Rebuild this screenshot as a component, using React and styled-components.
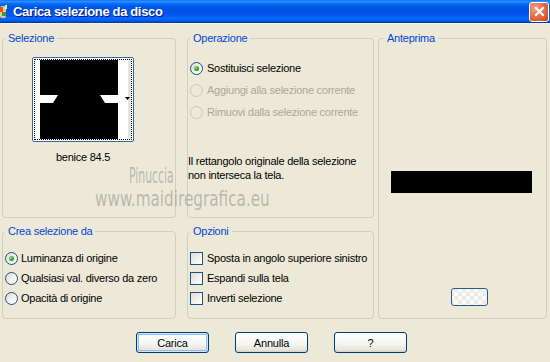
import React from 'react';
import styled, { createGlobalStyle, css } from 'styled-components';

const GlobalStyle = createGlobalStyle`
    html, body {
        margin: 0;
        padding: 0;
        background: #ece9d8;
    }
    body {
        font-family: "Liberation Sans", Arial, sans-serif;
        font-size: 11px;
        letter-spacing: -0.25px;
        color: #000;
    }
`;

const Window = styled.div`
    position: relative;
    width: 550px;
    height: 362px;
    overflow: hidden;
    background: #ece9d8;
`;

// XP luna title bar
const TitleBar = styled.div`
    height: 23px;
    display: flex;
    align-items: center;
    background: linear-gradient(to bottom,
        #0058ee 0%, #3593ff 4%, #288eff 8%, #127dff 12%, #036ffc 16%,
        #0262ee 22%, #0057e5 30%, #0054e3 40%, #0055eb 60%, #005bf5 70%,
        #026afe 80%, #0062ef 88%, #0052d6 93%, #0040ab 97%, #003092 100%);
    border-bottom: 1px solid #f4f3ee;
`;

const AppIcon = styled.svg`
    width: 8px;
    height: 16px;
    flex: none;
`;

const Title = styled.span`
    margin-left: 5px;
    color: #fff;
    font-family: "Liberation Sans", Arial, sans-serif;
    font-weight: bold;
    font-size: 13px;
    letter-spacing: -0.35px;
    text-shadow: 1px 1px 0 #0a1883;
`;

const CloseButton = styled.div`
    margin-left: auto;
    margin-right: 1px;
    width: 20px;
    height: 20px;
    box-sizing: border-box;
    border: 1px solid #fff;
    border-radius: 3px;
    background: radial-gradient(circle at 30% 30%, #f4a584 0%, #e4704a 45%, #c74520 100%);
    display: flex;
    align-items: center;
    justify-content: center;
`;

const Body = styled.div`
    padding: 8px 0 0 2px;
`;

const Panels = styled.div`
    display: flex;
    align-items: flex-start;
`;

const LeftGrid = styled.div`
    display: grid;
    grid-template-columns: 174px 187px;
    grid-template-rows: 186px 94px;
    column-gap: 11px;
    row-gap: 7px;
`;

const Group = styled.fieldset`
    box-sizing: border-box;
    margin: 0;
    padding: 0;
    min-width: 0;
    height: ${p => p.$height || '100%'};
    width: ${p => p.$width || 'auto'};
    margin-left: ${p => p.$offset || 0};
    border: 1px solid #d0d0bf;
    border-radius: 4px;
    display: flex;
    flex-direction: column;
`;

const Legend = styled.legend`
    margin-left: ${p => p.$indent || '2px'};
    padding: 0 3px;
    color: #0046d5;
    line-height: 13px;
    font-size: 11px;
`;

const ThumbWrap = styled.div`
    margin: 12px 0 0 29px;
    width: 102px;
    display: flex;
    flex-direction: column;
    align-items: center;
`;

const ThumbFrame = styled.div`
    box-sizing: border-box;
    width: 102px;
    height: 85px;
    padding: 1px;
    border: 1px solid #3c6a9e;
    border-radius: 2px;
    background: #fff;
`;

const ThumbInner = styled.div`
    box-sizing: border-box;
    height: 100%;
    border: 1px dotted #000;
    overflow: hidden;
    display: flex;
`;

const ThumbName = styled.div`
    margin-top: 9px;
    line-height: 13px;
`;

const OptionList = styled.div`
    display: flex;
    flex-direction: column;
    padding-top: ${p => p.$top || '0'};
`;

const OptionRow = styled.label`
    display: flex;
    align-items: center;
    gap: ${p => p.$gap || '4px'};
    height: ${p => p.$height || '20px'};
    padding-left: 2px;
    white-space: nowrap;
    color: ${p => (p.$disabled ? '#aca899' : '#000')};
`;

const Radio = styled.span`
    box-sizing: border-box;
    width: 13px;
    height: 13px;
    flex: none;
    border-radius: 50%;
    border: 1px solid ${p => (p.$disabled ? '#cac8bb' : '#1c5180')};
    background: ${p => (p.$disabled
        ? '#ece9d8'
        : 'linear-gradient(135deg, #dcdcd7 0%, #f2f2ee 55%, #fff 100%)')};
    display: flex;
    align-items: center;
    justify-content: center;
    ${p => p.$checked && css`
        &::after {
            content: '';
            width: 5px;
            height: 5px;
            border-radius: 50%;
            background: radial-gradient(circle at 35% 35%, #8ee28e 0%, #21a121 60%, #1a8a1a 100%);
        }
    `}
`;

const Checkbox = styled.span`
    box-sizing: border-box;
    width: 13px;
    height: 13px;
    flex: none;
    border: 1px solid #1c5180;
    background: linear-gradient(135deg, #dcdcd7 0%, #f3f3ef 60%, #fff 100%);
`;

const Message = styled.p`
    margin: 31px 0 0 0;
    line-height: 14px;
    white-space: nowrap;
`;

const PreviewBar = styled.div`
    margin: 126px 0 0 12px;
    width: 141px;
    height: 22px;
    background: #000;
`;

const CheckerButton = styled.div`
    box-sizing: border-box;
    margin: 95px 0 0 72px;
    width: 37px;
    height: 18px;
    border: 1px solid #2c5a8e;
    border-radius: 3px;
    background-color: #fafaf8;
    background-image:
        linear-gradient(45deg, #ecebe6 25%, transparent 25%, transparent 75%, #ecebe6 75%),
        linear-gradient(45deg, #ecebe6 25%, transparent 25%, transparent 75%, #ecebe6 75%);
    background-size: 8px 8px;
    background-position: 10px 3px, 14px 7px;
`;

const ButtonRow = styled.div`
    display: flex;
    gap: 26px;
    margin-top: 13px;
    padding-left: 134px;
`;

const Button = styled.button`
    box-sizing: border-box;
    width: 73px;
    height: 21px;
    padding: 0;
    border: 1px solid #003c74;
    border-radius: 3px;
    background: linear-gradient(to bottom, #fff 0%, #f4f4f0 60%, #e6e3da 90%, #d6d0c5 100%);
    font-family: "Liberation Sans", Arial, sans-serif;
    font-size: 11px;
    letter-spacing: -0.2px;
    color: #000;
    ${p => p.$default && css`
        box-shadow: inset 0 0 0 1px #cee7ff, inset 0 0 0 2px #98b8ee;
    `}
`;

const Watermark = styled.div`
    position: absolute;
    left: ${p => p.$left};
    top: ${p => p.$top};
    font-family: "DejaVu Sans Condensed", "DejaVu Sans", sans-serif;
    font-stretch: condensed;
    font-size: ${p => p.$size};
    letter-spacing: 0;
    color: rgba(120, 120, 120, 0.45);
    transform: scaleX(${p => p.$scale});
    transform-origin: left top;
    white-space: nowrap;
    pointer-events: none;
`;

const RadioOption = ({ checked, disabled, children, height, gap }) => (
    <OptionRow $disabled={disabled} $height={height} $gap={gap}>
        <Radio $checked={checked} $disabled={disabled} />
        {children}
    </OptionRow>
);

const CheckOption = ({ children }) => (
    <OptionRow $height="20px" $gap="4px">
        <Checkbox />
        {children}
    </OptionRow>
);

const Thumbnail = () => (
    <svg width="96" height="79" viewBox="0 0 96 79">
        <rect x="0" y="0" width="96" height="79" fill="#fff" />
        <rect x="5" y="0" width="78" height="79" fill="#000" />
        <polygon points="5,35 23,35 18,43 5,43" fill="#fff" />
        <polygon points="65,35 83,35 83,43 70,43" fill="#fff" />
        <rect x="93" y="0" width="3" height="79" fill="#e6e4dc" />
        <polygon points="90,37 95,37 92.5,40" fill="#000" />
    </svg>
);

const App = () => (
    <Window>
        <GlobalStyle />
        <TitleBar>
            <AppIcon viewBox="0 0 8 16">
                <rect x="0" y="2" width="6" height="12" rx="2" fill="#f7c48a" />
                <rect x="0" y="3" width="3" height="5" fill="#e2542a" />
                <rect x="2" y="8" width="4" height="4" fill="#3a9a3a" />
                <rect x="5" y="1" width="2" height="4" fill="#f2e7c0" />
            </AppIcon>
            <Title>Carica selezione da disco</Title>
            <CloseButton>
                <svg width="11" height="11" viewBox="0 0 11 11">
                    <path d="M2 2 L9 9 M9 2 L2 9" stroke="#fff" strokeWidth="2" strokeLinecap="square" />
                </svg>
            </CloseButton>
        </TitleBar>

        <Body>
            <Panels>
                <LeftGrid>
                    <Group>
                        <Legend>Selezione</Legend>
                        <ThumbWrap>
                            <ThumbFrame>
                                <ThumbInner>
                                    <Thumbnail />
                                </ThumbInner>
                            </ThumbFrame>
                            <ThumbName>benice 84.5</ThumbName>
                        </ThumbWrap>
                    </Group>

                    <Group>
                        <Legend>Operazione</Legend>
                        <OptionList $top="12px">
                            <RadioOption checked height="22px">Sostituisci selezione</RadioOption>
                            <RadioOption disabled height="22px">Aggiungi alla selezione corrente</RadioOption>
                            <RadioOption disabled height="22px">Rimuovi dalla selezione corrente</RadioOption>
                        </OptionList>
                        <Message>
                            Il rettangolo originale della selezione<br />
                            non interseca la tela.
                        </Message>
                    </Group>

                    <Group>
                        <Legend>Crea selezione da</Legend>
                        <OptionList $top="10px">
                            <RadioOption checked gap="3px">Luminanza di origine</RadioOption>
                            <RadioOption gap="3px">Qualsiasi val. diverso da zero</RadioOption>
                            <RadioOption gap="3px">Opacità di origine</RadioOption>
                        </OptionList>
                    </Group>

                    <Group>
                        <Legend>Opzioni</Legend>
                        <OptionList $top="10px">
                            <CheckOption>Sposta in angolo superiore sinistro</CheckOption>
                            <CheckOption>Espandi sulla tela</CheckOption>
                            <CheckOption>Inverti selezione</CheckOption>
                        </OptionList>
                    </Group>
                </LeftGrid>

                <Group $height="287px" $width="169px" $offset="4px">
                    <Legend $indent="5px">Anteprima</Legend>
                    <PreviewBar />
                    <CheckerButton />
                </Group>
            </Panels>

            <ButtonRow>
                <Button $default>Carica</Button>
                <Button>Annulla</Button>
                <Button>?</Button>
            </ButtonRow>
        </Body>

        <Watermark $left="129px" $top="163px" $size="22px" $scale="0.55">Pinuccia</Watermark>
        <Watermark $left="95px" $top="186px" $size="22px" $scale="0.77">www.maidiregrafica.eu</Watermark>
    </Window>
);

export default App;
